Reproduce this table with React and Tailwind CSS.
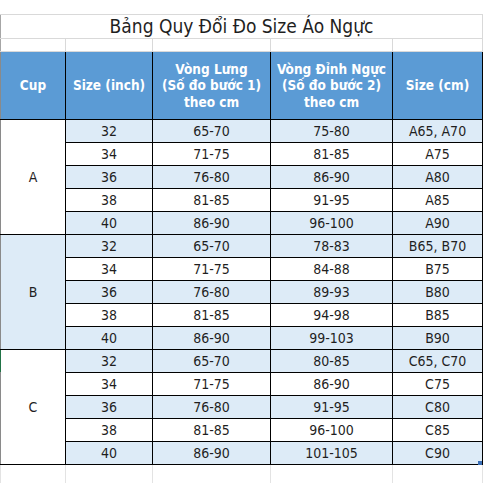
const groups = [
  {
    cup: "A",
    shaded: false,
    rows: [
      ["32", "65-70", "75-80", "A65, A70"],
      ["34", "71-75", "81-85", "A75"],
      ["36", "76-80", "86-90", "A80"],
      ["38", "81-85", "91-95", "A85"],
      ["40", "86-90", "96-100", "A90"],
    ],
  },
  {
    cup: "B",
    shaded: true,
    rows: [
      ["32", "65-70", "78-83", "B65, B70"],
      ["34", "71-75", "84-88", "B75"],
      ["36", "76-80", "89-93", "B80"],
      ["38", "81-85", "94-98", "B85"],
      ["40", "86-90", "99-103", "B90"],
    ],
  },
  {
    cup: "C",
    shaded: false,
    rows: [
      ["32", "65-70", "80-85", "C65, C70"],
      ["34", "71-75", "86-90", "C75"],
      ["36", "76-80", "91-95", "C80"],
      ["38", "81-85", "96-100", "C85"],
      ["40", "86-90", "101-105", "C90"],
    ],
  },
];

const font = { fontFamily: '"DejaVu Sans Condensed", "Noto Sans", sans-serif' };

export default function App() {
  return (
    <div className="w-[483px] h-[483px] bg-white overflow-hidden pt-[14px] relative" style={font}>
      <table className="border-collapse table-fixed w-[482px] text-[#1f1f1f]">
        <colgroup>
          <col className="w-[65px]" />
          <col className="w-[87px]" />
          <col className="w-[118px]" />
          <col className="w-[122px]" />
          <col className="w-[90px]" />
        </colgroup>
        <tbody>
          {/* Title */}
          <tr className="h-[24px]">
            <td colSpan={5} className="border border-[#d9d9d9] border-l-[#a6a6a6] text-center text-[19px] leading-none p-0">
              Bảng Quy Đổi Đo Size Áo Ngực
            </td>
          </tr>
          <tr className="h-[13px]">
            {[0, 1, 2, 3, 4].map((i) => (
              <td key={i} className={`border border-[#d9d9d9] p-0 ${i === 0 ? "border-l-[#a6a6a6]" : ""}`} />
            ))}
          </tr>

          {/* Header */}
          <tr className="h-[68px] bg-[#5b9bd5] text-white font-bold text-[13.5px] leading-[16.5px]">
            <th className="border border-black border-l-[#8a8a8a] p-0">Cup</th>
            <th className="border border-black p-0">Size (inch)</th>
            <th className="border border-black p-0">
              Vòng Lưng
              <br />
              (Số đo bước 1)
              <br />
              theo cm
            </th>
            <th className="border border-black p-0">
              Vòng Đỉnh Ngực
              <br />
              (Số đo bước 2)
              <br />
              theo cm
            </th>
            <th className="border border-black p-0">Size (cm)</th>
          </tr>

          {groups.map((g) =>
            g.rows.map((r, i) => {
              const blue = i % 2 === 0;
              return (
                <tr key={g.cup + i} className="h-[23px] text-[14px] leading-none">
                  {i === 0 && (
                    <td
                      rowSpan={5}
                      className={`border border-black border-l-[#8a8a8a] text-center p-0 ${g.shaded ? "bg-[#ddebf7]" : "bg-white"}`}
                    >
                      {g.cup}
                    </td>
                  )}
                  {r.map((v, j) => (
                    <td
                      key={j}
                      className={`border border-black text-center p-0 ${blue ? "bg-[#ddebf7]" : "bg-white"}`}
                    >
                      {v}
                    </td>
                  ))}
                </tr>
              );
            })
          )}

          <tr className="h-[18px]">
            {[0, 1, 2, 3, 4].map((i) => (
              <td key={i} className="border-x border-[#e3e3e3] p-0" />
            ))}
          </tr>
        </tbody>
      </table>
      {/* excel selection marks */}
      <div className="absolute left-0 top-[350px] w-[1px] h-[22px] bg-[#217346]" />
      <div className="absolute left-[478px] top-[461px] w-[4px] h-[4px] bg-[#3b6fb6]" />
    </div>
  );
}
